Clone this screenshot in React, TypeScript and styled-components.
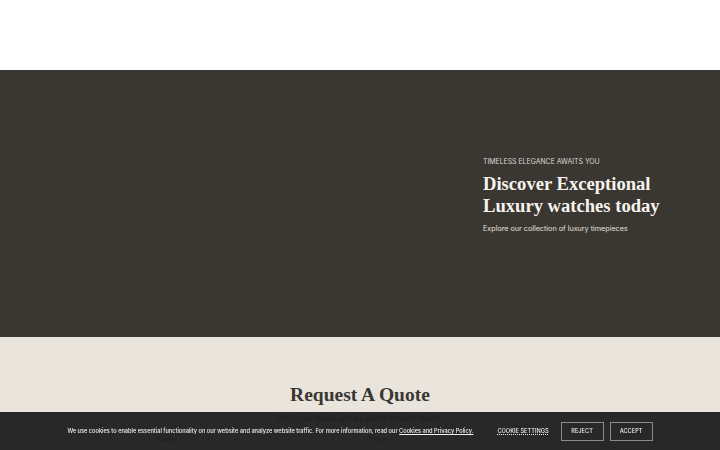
import styled, { createGlobalStyle } from "styled-components";

const GlobalStyle = createGlobalStyle`
  html, body {
    margin: 0;
    padding: 0;
    background: #ffffff;
    font-family: Inter, "Liberation Sans", sans-serif;
  }
  * {
    box-sizing: border-box;
  }
`;

const Page = styled.div`
  display: flex;
  flex-direction: column;
  min-height: 450px;
`;

const Header = styled.header`
  height: 70px;
  background: #ffffff;
`;

const Hero = styled.section`
  display: grid;
  grid-template-columns: 1fr 237px;
  align-items: center;
  height: 267px;
  padding-bottom: 18px;
  background: #3a3631;
  color: #f3f0ea;
`;

const HeroText = styled.div`
  display: flex;
  flex-direction: column;
  padding-right: 30px;
`;

const Eyebrow = styled.p`
  margin: 0 0 7px;
  font-size: 6.9px;
  text-transform: uppercase;
  color: #dcd8d1;
`;

const Headline = styled.h1`
  margin: 0 0 7px;
  font-family: "Liberation Serif", "DejaVu Serif", serif;
  font-weight: 700;
  font-size: 18.6px;
  line-height: 22px;
  color: #f6f3ee;
`;

const Lead = styled.p`
  margin: 0;
  font-size: 7.2px;
  color: #e6e2dc;
`;

const QuoteSection = styled.section`
  flex: 1;
  display: flex;
  flex-direction: column;
  align-items: center;
  padding-top: 45px;
  background: #e9e4dc;
  color: #3a3631;
`;

const QuoteTitle = styled.h2`
  margin: 0;
  font-family: "Liberation Serif", "DejaVu Serif", serif;
  font-weight: 700;
  font-size: 19.5px;
  line-height: 26px;
`;

const QuoteNote = styled.p`
  margin: 6px 0 12px;
  font-size: 7.2px;
`;

const Form = styled.form`
  display: grid;
  grid-template-columns: 1fr 1fr;
  gap: 12px;
  width: 410px;
`;

const Field = styled.label`
  display: flex;
  flex-direction: column;
  font-size: 7.2px;
`;

const CookieBar = styled.div`
  position: fixed;
  left: 0;
  right: 0;
  bottom: 0;
  height: 38px;
  display: flex;
  align-items: center;
  justify-content: center;
  background: rgba(30, 30, 30, 0.95);
  color: #f1f1f1;
`;

const CookieText = styled.p`
  margin: 0 24px 0 0;
  font-size: 5.65px;
  font-weight: 500;
  white-space: nowrap;
`;

const PolicyLink = styled.a`
  color: inherit;
  text-decoration: underline;
`;

const SettingsLink = styled.a`
  margin-right: 12px;
  font-size: 5.65px;
  font-weight: 500;
  text-transform: uppercase;
  color: #f1f1f1;
  text-decoration: underline;
  text-decoration-style: dotted;
`;

const CookieButton = styled.button<{ $first?: boolean }>`
  width: 43px;
  height: 19px;
  margin-left: ${(p) => (p.$first ? "0" : "6px")};
  padding: 0;
  border: 1px solid #8a8a8a;
  background: transparent;
  color: #f1f1f1;
  font-family: inherit;
  font-size: 5.65px;
  font-weight: 500;
  text-transform: uppercase;
`;

export default function App() {
  return (
    <>
      <GlobalStyle />
      <Page>
        <Header />
        <Hero>
          <div />
          <HeroText>
            <Eyebrow>Timeless elegance awaits you</Eyebrow>
            <Headline>Discover Exceptional Luxury watches today</Headline>
            <Lead>Explore our collection of luxury timepieces</Lead>
          </HeroText>
        </Hero>
        <QuoteSection>
          <QuoteTitle>Request A Quote</QuoteTitle>
          <QuoteNote>Fill in your details and we will be in touch shortly</QuoteNote>
          <Form>
            <Field>Name</Field>
            <Field>Phone</Field>
          </Form>
        </QuoteSection>
      </Page>
      <CookieBar>
        <CookieText>
          We use cookies to enable essential functionality on our website and
          analyze website traffic. For more information, read our{" "}
          <PolicyLink href="#">Cookies and Privacy Policy.</PolicyLink>
        </CookieText>
        <SettingsLink href="#">Cookie settings</SettingsLink>
        <CookieButton $first>Reject</CookieButton>
        <CookieButton>Accept</CookieButton>
      </CookieBar>
    </>
  );
}
